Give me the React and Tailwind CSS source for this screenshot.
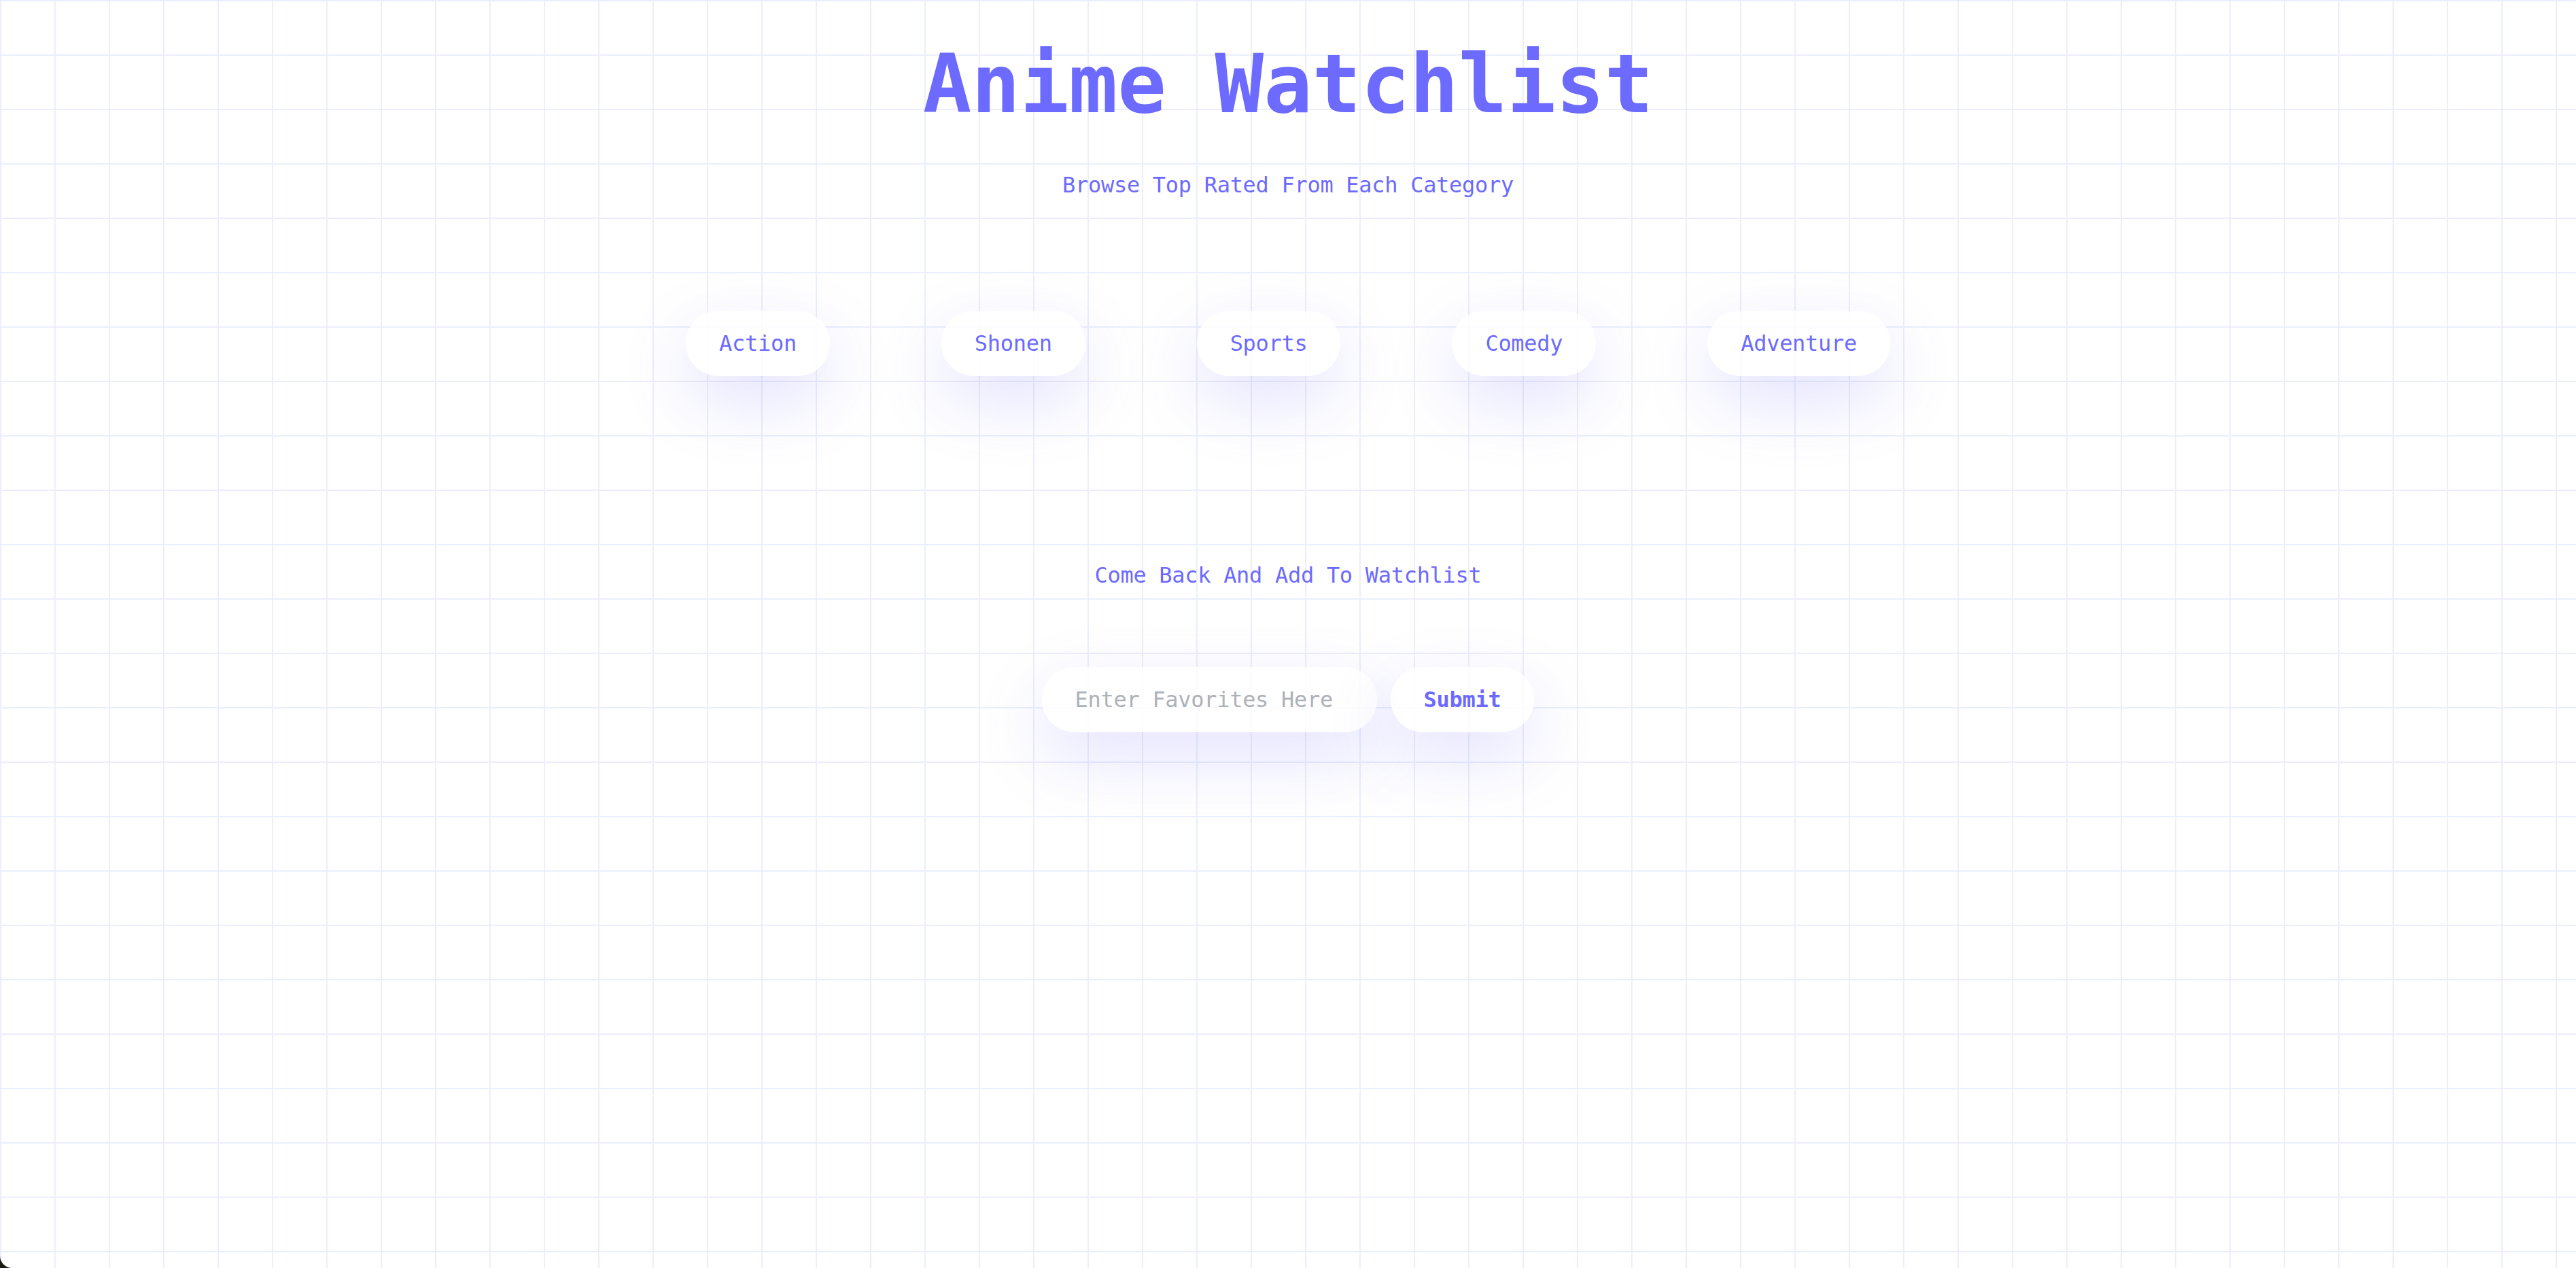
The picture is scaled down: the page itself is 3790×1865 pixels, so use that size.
import React from "react";

const categories = ["Action", "Shonen", "Sports", "Comedy", "Adventure"];

export default function App() {
  return (
    <div className="min-h-screen bg-[#1c1a12]">
      <div
        className="min-h-screen w-full rounded-bl-[18px] bg-white bg-[linear-gradient(to_right,#ebeefe_2px,transparent_2px),linear-gradient(to_bottom,#ebeefe_2px,transparent_2px)] bg-[length:80px_80px] flex flex-col items-center text-[#6c6aff]"
        style={{ fontFamily: '"DejaVu Sans Mono", "Liberation Mono", monospace' }}
      >
        <h1 className="mt-[65px] text-[119px] leading-none font-bold">
          Anime Watchlist
        </h1>
        <p className="mt-[72px] text-[32px] leading-none tracking-[-0.3px]">
          Browse Top Rated From Each Category
        </p>
        <div className="mt-[169px] flex gap-[164px]">
          {categories.map((c) => (
            <button
              key={c}
              className="h-24 px-[49px] rounded-full bg-white/85 text-[32px] leading-none tracking-[-0.3px] text-[#6c6aff] shadow-[0_36px_100px_rgba(108,106,255,0.2)]"
            >
              {c}
            </button>
          ))}
        </div>
        <p className="mt-[277px] text-[32px] leading-none tracking-[-0.3px]">
          Come Back And Add To Watchlist
        </p>
        <form
          className="mt-[119px] flex gap-5"
          onSubmit={(e) => e.preventDefault()}
        >
          <input
            type="text"
            placeholder="Enter Favorites Here"
            className="w-[493px] h-24 px-[49px] rounded-full bg-white/85 text-[32px] leading-none tracking-[-0.3px] text-[#6c6aff] placeholder:text-[#adb1bb] outline-none shadow-[0_36px_100px_rgba(108,106,255,0.2)]"
          />
          <button
            type="submit"
            className="h-24 px-[49px] rounded-full bg-white/85 text-[32px] leading-none font-bold tracking-[-0.3px] text-[#6c6aff] shadow-[0_36px_100px_rgba(108,106,255,0.2)]"
          >
            Submit
          </button>
        </form>
      </div>
    </div>
  );
}
